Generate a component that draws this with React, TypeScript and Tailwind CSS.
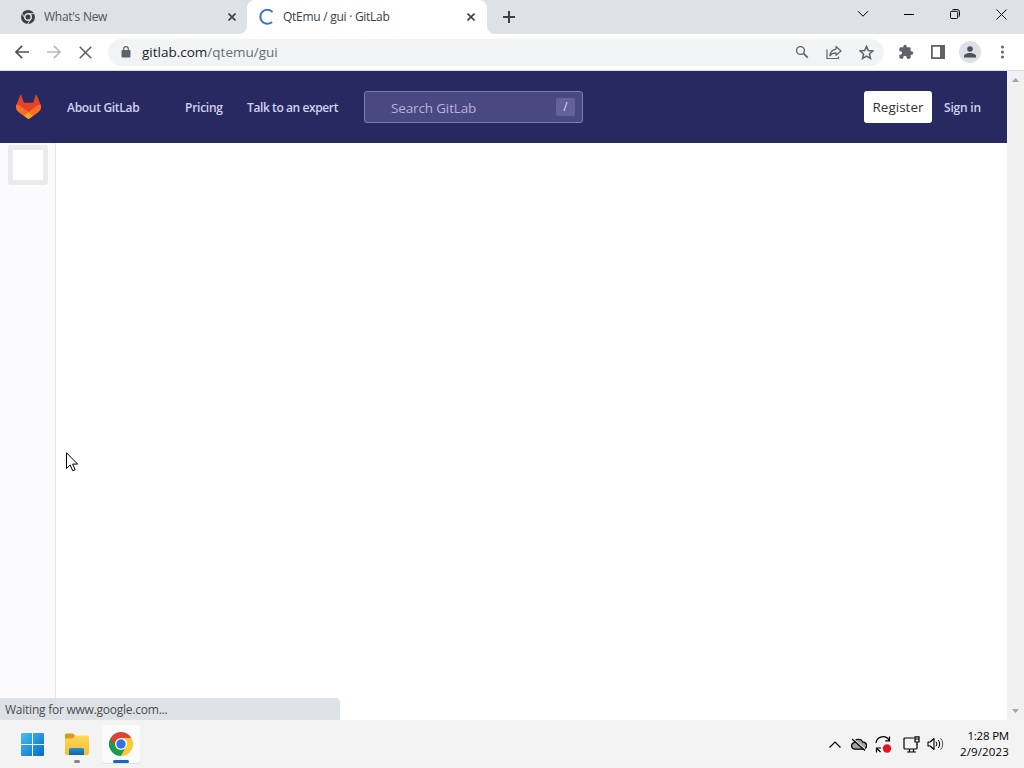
import type { ReactNode } from "react";

interface TabProps {
  title: string;
  icon: ReactNode;
  active?: boolean;
}

function ChromeMonoIcon() {
  return (
    <svg width="14" height="14" viewBox="0 0 24 24" fill="none">
      <circle cx="12" cy="12" r="12" fill="#3c4043" />
      <circle cx="12" cy="12" r="5.6" fill="#3c4043" stroke="#dee1e6" strokeWidth="2.6" />
      <path d="M12 6.4h11M7.2 15L1.6 5.6M16.8 15l-5.4 9" stroke="#dee1e6" strokeWidth="1.6" />
    </svg>
  );
}

function SpinnerIcon() {
  return (
    <svg width="16" height="16" viewBox="0 0 16 16" fill="none">
      <path d="M13.6 3.2A7 7 0 1 0 13 13" stroke="#3f6fd1" strokeWidth="2" />
    </svg>
  );
}

function CloseIcon() {
  return (
    <svg width="8" height="8" viewBox="0 0 8 8" fill="none">
      <path d="M.5.5l7 7M7.5.5l-7 7" stroke="#3c4043" strokeWidth="1.6" />
    </svg>
  );
}

function Tab({ title, icon, active }: TabProps) {
  return (
    <div
      className={
        active
          ? "relative flex h-[34px] w-60 items-center rounded-t-lg bg-white pr-3 pl-3"
          : "flex h-[34px] w-[247px] items-center pr-[11px] pl-[21px]"
      }
    >
      {active && (
        <>
          <svg className="absolute bottom-0 -left-2" width="8" height="8">
            <path d="M8 0v8H0a8 8 0 0 0 8-8z" fill="#fff" />
          </svg>
          <svg className="absolute -right-2 bottom-0" width="8" height="8">
            <path d="M0 0v8h8a8 8 0 0 1-8-8z" fill="#fff" />
          </svg>
        </>
      )}
      {icon}
      <span
        className={
          active
            ? "ml-2 flex-1 text-[12px] tracking-[-0.27px] text-[#3c4043]"
            : "ml-[9px] flex-1 text-[12px] tracking-[-0.28px] text-[#50555a]"
        }
      >
        {title}
      </span>
      <CloseIcon />
    </div>
  );
}

function WindowControls() {
  return (
    <div className="ml-auto flex h-7 items-center text-black">
      <div className="flex w-[46px] justify-center">
        <svg width="12" height="8" viewBox="0 0 12 8" fill="none" stroke="currentColor">
          <path d="M1 1.2l5 5 5-5" />
        </svg>
      </div>
      <div className="flex w-[46px] justify-center">
        <svg width="10" height="2">
          <path d="M0 1.5h10" stroke="currentColor" />
        </svg>
      </div>
      <div className="flex w-[46px] justify-center">
        <svg width="10" height="10" viewBox="0 0 11 11" fill="none" stroke="currentColor" strokeWidth="1.1">
          <rect x=".5" y="2.5" width="8" height="8" rx="1.5" />
          <path d="M2.6 1C3 .6 3.4.5 4 .5h3.500a3 3 0 0 1 3 3V7c0 .6-.1 1-.6 1.500" />
        </svg>
      </div>
      <div className="flex w-[46px] justify-center">
        <svg width="11" height="11" viewBox="0 0 11 11" fill="none" stroke="currentColor">
          <path d="M.5.5l10 10M10.500.5l-10 10" />
        </svg>
      </div>
    </div>
  );
}

function TabStrip() {
  return (
    <div className="flex h-[34px] bg-[#dee1e6]">
      <Tab title="What's New" icon={<ChromeMonoIcon />} />
      <Tab title="QtEmu / gui · GitLab" icon={<SpinnerIcon />} active />
      <div className="flex w-11 items-center justify-center">
        <svg width="12" height="12" viewBox="0 0 12 12">
          <path d="M6 0v12M0 6h12" stroke="#3c4043" strokeWidth="2" />
        </svg>
      </div>
      <WindowControls />
    </div>
  );
}

function Toolbar() {
  return (
    <div className="flex h-[37px] items-center border-b border-[#d9dce1] bg-white">
      <div className="flex w-[108px] items-center gap-[18px] pl-[15px]">
        <svg width="14" height="14" viewBox="0 0 14 14" fill="none" stroke="#4f5357" strokeWidth="1.7">
          <path d="M14 7H1.200M7.200.8L1 7l6.200 6.200" />
        </svg>
        <svg width="14" height="14" viewBox="0 0 14 14" fill="none" stroke="#b9bbbe" strokeWidth="1.7">
          <path d="M0 7h12.800M6.800.8L13 7l-6.200 6.200" />
        </svg>
        <svg width="13" height="13" viewBox="0 0 13 13" fill="none" stroke="#5f6368" strokeWidth="1.6">
          <path d="M.7.7l11.600 11.600M12.300.7L.7 12.300" />
        </svg>
      </div>
      <div className="flex h-[27px] w-[776px] items-center rounded-full bg-[#f1f3f4] pr-[10px] pl-[13px]">
        <svg width="10" height="12" viewBox="0 0 10 12">
          <rect x=".5" y="4" width="9" height="7.500" rx="1" fill="#5f6368" />
          <path d="M2.700 4.500V3a2.300 2.300 0 0 1 4.600 0v1.500" fill="none" stroke="#5f6368" strokeWidth="1.200" />
        </svg>
        <span className="ml-[11px] flex-1 text-[13.5px] text-[#6a6e73]">
          <span className="text-[#202124]">gitlab.com</span>/qtemu/gui
        </span>
        <svg className="mr-[17px]" width="14" height="14" viewBox="0 0 14 14" fill="none" stroke="#5f6368">
          <circle cx="5.500" cy="5.500" r="3.900" strokeWidth="1.400" />
          <path d="M8.400 8.400l4.300 4.300" strokeWidth="1.700" />
        </svg>
        <svg className="mr-[17px]" width="16" height="15" viewBox="0 0 16 15" fill="none" stroke="#5f6368" strokeWidth="1.200">
          <path d="M1 4.500v9h11.500v-2" />
          <path d="M10 1.500L15 6l-5 4.300V7.900C7 7.900 5.200 8.800 3.800 10.800 4.300 7 6.300 4.600 10 4.100z" strokeLinejoin="round" />
        </svg>
        <svg width="15" height="15" viewBox="0 0 15 15" fill="none" stroke="#5f6368" strokeWidth="1.500">
          <path d="M7.500 1.400l1.800 4.200 4.600.4-3.500 3 1.100 4.500-4-2.400-4 2.400 1.100-4.500-3.500-3 4.600-.4z" />
        </svg>
      </div>
      <div className="flex flex-1 items-center pl-[14px]">
        <svg width="16" height="16" viewBox="0 0 24 24" fill="#5f6368">
          <path d="M20.500 11H19V7c0-1.100-.9-2-2-2h-4V3.500a2.500 2.500 0 0 0-5 0V5H4c-1.100 0-2 .9-2 2v3.800h1.500a2.700 2.700 0 0 1 0 5.400H2V20c0 1.100.9 2 2 2h3.800v-1.500a2.700 2.700 0 0 1 5.400 0V22H17c1.100 0 2-.9 2-2v-4h1.500a2.500 2.500 0 0 0 0-5z" />
        </svg>
        <svg className="ml-[17px]" width="14" height="14" viewBox="0 0 14 14">
          <rect x=".9" y=".9" width="12.200" height="12.200" fill="#fff" stroke="#5f6368" strokeWidth="1.800" />
          <path d="M9 0h5v14H9z" fill="#5f6368" />
        </svg>
        <div className="ml-[14px] flex size-[22px] items-center justify-center rounded-full bg-[#dde1e6]">
          <svg width="12" height="12" viewBox="0 0 12 12" fill="#4b525a">
            <circle cx="6" cy="3" r="2.800" />
            <path d="M0 11.500V10c0-2 3.500-3 6-3s6 1 6 3v1.500z" />
          </svg>
        </div>
        <svg className="ml-5" width="4" height="14" viewBox="0 0 4 14" fill="#5f6368">
          <circle cx="1.500" cy="2" r="1.500" />
          <circle cx="1.500" cy="7" r="1.500" />
          <circle cx="1.500" cy="12" r="1.500" />
        </svg>
      </div>
    </div>
  );
}

function GitLabLogo() {
  return (
    <svg width="25" height="24" viewBox="0 0 26 25">
      <path
        d="M25.500 9.900L21.900.7c-.3-.8-1.300-.8-1.600 0l-2.500 7.500H8.200L5.700.7C5.400-.1 4.400-.1 4.100.7L.5 9.900a6.700 6.700 0 0 0 2.200 7.700L13 25.200l10.300-7.600a6.700 6.700 0 0 0 2.200-7.700z"
        fill="#e24329"
      />
      <path d="M25.500 9.900c-2 .4-3.500 1.200-4.800 2.100L13 17.800l4.900 3.700 5.400-3.900a6.700 6.700 0 0 0 2.200-7.700z" fill="#fc6d26" />
      <path d="M8.100 21.500L13 25.200l4.900-3.700L13 17.800z" fill="#fca326" />
      <path d="M5.300 12C4 11.100 2.500 10.300.5 9.900a6.700 6.700 0 0 0 2.200 7.700l5.400 3.900 4.900-3.700z" fill="#fc6d26" />
    </svg>
  );
}

function GitLabHeader() {
  return (
    <header className="flex h-[72px] items-center bg-[#292961] pr-[26px] pl-4 text-[12px] font-semibold text-[#d1d1f0]">
      <GitLabLogo />
      <nav className="flex items-center pt-0.5">
        <span className="ml-[26px] w-[118px] tracking-[-0.3px]">About GitLab</span>
        <span className="w-[62px] tracking-[-0.25px]">Pricing</span>
        <span className="w-[117px] tracking-[-0.4px]">Talk to an expert</span>
      </nav>
      <div className="flex h-8 w-[219px] items-center justify-between rounded-[3px] border border-[#7d7bb0] bg-[#4a4880] pr-[7px] pl-[26px] font-normal">
        <span className="pt-0.5 text-[13.5px] tracking-[-0.15px] text-[#b4b3dc]">Search GitLab</span>
        <kbd className="flex h-[18px] w-[19px] items-center justify-center rounded-xs bg-[#63619a] font-['Open_Sans',sans-serif] text-[12px] text-[#dcdcf4]">
          /
        </kbd>
      </div>
      <button className="ml-auto h-8 w-[68px] rounded-[3px] bg-white text-[13.5px] font-normal text-[#333238]">
        Register
      </button>
      <span className="ml-3 w-[37px] pt-0.5 tracking-[-0.2px] whitespace-nowrap">Sign in</span>
    </header>
  );
}

function Scrollbar() {
  return (
    <div className="flex w-[17px] flex-col items-center justify-between bg-[#f1f1f1] pt-[7px] pb-[7px]">
      <svg width="7" height="4">
        <path d="M0 4L3.500 0 7 4z" fill="#a3a3a3" />
      </svg>
      <svg width="7" height="4">
        <path d="M0 0l3.500 4L7 0z" fill="#a3a3a3" />
      </svg>
    </div>
  );
}

function ChromeIcon() {
  return (
    <svg width="24" height="24" viewBox="0 0 24 24">
      <path d="M12 12L1.600 6A12 12 0 0 0 12 24l5.200-9z" fill="#1e9a4d" />
      <path d="M12 6h10.400A12 12 0 0 1 12 24l5.200-9z" fill="#fcc934" />
      <path d="M1.600 6L6.800 15 12 12V6h10.400A12 12 0 0 0 1.600 6z" fill="#db4437" />
      <circle cx="12" cy="12" r="6" fill="#fff" />
      <circle cx="12" cy="12" r="4.700" fill="#2f74e0" />
    </svg>
  );
}

function Taskbar() {
  return (
    <div className="flex h-12 bg-[#f3f3f3]">
      <div className="flex w-[347px] pl-3">
        <div className="flex w-10 items-center justify-center">
          <svg width="24" height="24" viewBox="0 0 24 24">
            <defs>
              <linearGradient id="win" x1="0" y1="0" x2="24" y2="24" gradientUnits="userSpaceOnUse">
                <stop stopColor="#46c5f4" />
                <stop offset="1" stopColor="#0669c4" />
              </linearGradient>
            </defs>
            <path d="M2 1h10v11H1V2a1 1 0 0 1 1-1zM13 1h10a1 1 0 0 1 1 1v10H13zM1 13h11v11H2a1 1 0 0 1-1-1zM13 13h11v10a1 1 0 0 1-1 1H13z" fill="url(#win)" />
          </svg>
        </div>
        <div className="relative ml-[5px] flex w-10 items-center justify-center">
          <svg width="24" height="23" viewBox="0 0 24 23">
            <defs>
              <linearGradient id="folder" x1="0" y1="0" x2="0" y2="1">
                <stop stopColor="#ffd85c" />
                <stop offset="1" stopColor="#f3bd2c" />
              </linearGradient>
              <linearGradient id="folderFront" x1="0" y1="0" x2="0" y2="1">
                <stop stopColor="#2b8fd0" />
                <stop offset="1" stopColor="#11639f" />
              </linearGradient>
            </defs>
            <path d="M0 2A1.500 1.500 0 0 1 1.500.5H8L10.500 3v4H0z" fill="#d59b17" />
            <path d="M0 5.500h7.500l3-3h12A1.500 1.500 0 0 1 24 4v16a2 2 0 0 1-2 2H2a2 2 0 0 1-2-2z" fill="url(#folder)" />
            <path d="M4 22v-5.500A1.500 1.500 0 0 1 5.500 15h12a1.500 1.500 0 0 1 1.500 1.500V22z" fill="url(#folderFront)" />
          </svg>
          <span className="absolute bottom-[5px] h-[3px] w-1.5 rounded-full bg-[#858585]" />
        </div>
        <div className="relative mt-[5px] ml-[5px] flex h-[38px] w-[38px] items-center justify-center rounded bg-[#fbfbfb] shadow-[0_1px_0_#e2e2e2]">
          <ChromeIcon />
          <span className="absolute bottom-0 h-[3px] w-4 rounded-full bg-[#1668c7]" />
        </div>
      </div>
      <div className="ml-auto flex items-center pr-[15px] text-black">
        <svg width="12" height="7" viewBox="0 0 12 7" fill="none" stroke="currentColor" strokeWidth="1.200">
          <path d="M.5 6.500L6 1l5.500 5.500" />
        </svg>
        <svg className="ml-[9px]" width="17" height="14" viewBox="0 0 17 14" fill="none" stroke="currentColor" strokeWidth="1.200">
          <path d="M4.500 12.200a3.300 3.300 0 0 1-.3-6.500 4.500 4.500 0 0 1 8.600-.5 3.500 3.500 0 0 1 .5 7z" fill="#a4a4a4" />
          <path d="M3.500 2.300l11.500 10" stroke="#f3f3f3" />
          <path d="M2 2l13 11.500" />
        </svg>
        <svg className="ml-2" width="17" height="17" viewBox="0 0 17 17" fill="none" stroke="currentColor" strokeWidth="1.200">
          <path d="M1 7a7 7 0 0 1 13.200-2.500M14.500.5v4.300h-4.300M6 12H1.500v4.500M1.500 12l4 4" />
          <circle cx="12" cy="12.500" r="4.200" fill="#e81123" stroke="none" />
        </svg>
        <svg className="ml-[11px]" width="18" height="17" viewBox="0 0 18 17" fill="none" stroke="currentColor" strokeWidth="1.200">
          <path d="M11 2H2a1 1 0 0 0-1 1v9a1 1 0 0 0 1 1h11a1 1 0 0 0 1-1V8M4 16h9M6.500 13v3M10.500 13v3" />
          <path d="M12 .8h4V6h-4zM12 3h4M14 6v2.500" />
        </svg>
        <svg className="ml-[6px]" width="17" height="14" viewBox="0 0 17 14" fill="none" stroke="currentColor">
          <path d="M1 5h2.200L7 1.500v11L3.200 9H1z" strokeWidth="1.100" strokeLinejoin="round" />
          <path d="M9 4.700a3.500 3.500 0 0 1 0 4.600M11.200 3a6 6 0 0 1 0 8" />
          <path d="M13.500 1.200a8.500 8.500 0 0 1 0 11.600" stroke="#555" />
        </svg>
        <div className="ml-4 flex w-[49px] flex-col items-end text-[11.5px] leading-4 whitespace-nowrap">
          <span className="tracking-[-0.2px]">1:28 PM</span>
          <span className="tracking-[0.15px]">2/9/2023</span>
        </div>
      </div>
    </div>
  );
}

export default function App() {
  return (
    <div className="relative flex h-[768px] w-[1024px] flex-col overflow-hidden bg-white font-['Open_Sans',sans-serif]">
      <TabStrip />
      <Toolbar />
      <div className="relative flex flex-1">
        <main className="flex flex-1 flex-col">
          <GitLabHeader />
          <div className="flex flex-1">
            <aside className="w-14 border-r border-[#e6e6ea] bg-[#fbfbfd] pt-[2px] pl-2">
              <div className="size-10 rounded-[3px] border-[5px] border-[#ebebed] bg-white" />
            </aside>
          </div>
        </main>
        <Scrollbar />
        {/* Browser status bubble */}
        <div className="absolute bottom-0 left-0 flex h-[22px] w-[340px] items-center rounded-tr bg-[#dee1e6] pt-0.5 pl-[5px] text-[12px] tracking-[-0.24px] text-[#4a4e53]">
          Waiting for www.google.com...
        </div>
      </div>
      <Taskbar />
      {/* Mouse pointer */}
      <svg className="absolute top-[452px] left-[66px]" width="13" height="20" viewBox="0 0 13 20">
        <path d="M.5.800v15.700l3.700-3.500 2.500 5.700 2.400-1-2.500-5.600h5z" fill="#fff" stroke="#000" />
      </svg>
    </div>
  );
}
